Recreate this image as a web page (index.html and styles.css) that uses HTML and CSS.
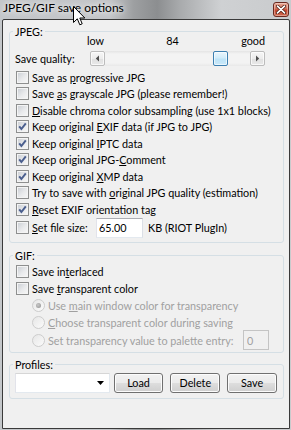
FILE: index.html
```html
<!DOCTYPE html>
<html lang="en">
<head>
<meta charset="utf-8">
<title>JPEG/GIF save options</title>
<link rel="stylesheet" href="styles.css">
</head>
<body>
<div class="window">
  <div class="titlebar">
    <span class="title">JPEG/GIF save options</span>
    <span class="close" role="button" aria-label="Close">
      <svg width="10" height="9" viewBox="0 0 10 9"><path d="M1.5 1.2 L8.5 7.8 M8.5 1.2 L1.5 7.8" stroke="#4a1a10" stroke-width="3.2" stroke-linecap="round"/><path d="M1.5 1.2 L8.5 7.8 M8.5 1.2 L1.5 7.8" stroke="#ffffff" stroke-width="1.7" stroke-linecap="round"/></svg>
    </span>
  </div>
  <div class="client">
    <fieldset class="group group-jpeg">
      <legend>JPEG:</legend>
      <div class="scale"><span>low</span><span>84</span><span>good</span></div>
      <div class="quality">
        <span class="q-label">Save quality:</span>
        <div class="scrollbar">
          <span class="sb-btn"><svg width="5" height="7" viewBox="0 0 5 7"><path d="M4 0.5 L0.8 3.5 L4 6.5 Z" fill="#505050"/></svg></span>
          <span class="sb-track"><span class="sb-thumb"></span></span>
          <span class="sb-btn"><svg width="5" height="7" viewBox="0 0 5 7"><path d="M1 0.5 L4.2 3.5 L1 6.5 Z" fill="#505050"/></svg></span>
        </div>
      </div>
      <div class="rows">
        <label class="row"><span class="cb"></span><span class="txt">Save as <u>p</u>rogressive JPG</span></label>
        <label class="row"><span class="cb"></span><span class="txt">Save <u>a</u>s grayscale JPG (please remember!)</span></label>
        <label class="row"><span class="cb"></span><span class="txt"><u>D</u>isable chroma color subsampling (use 1x1 blocks)</span></label>
        <label class="row"><span class="cb on"><svg width="11" height="11" viewBox="0 0 11 11"><path d="M2.2 5.4 L4.4 8 L8.8 2.4" fill="none" stroke="#4b5f8e" stroke-width="2"/></svg></span><span class="txt">Keep original <u>E</u>XIF data (if JPG to JPG)</span></label>
        <label class="row"><span class="cb on"><svg width="11" height="11" viewBox="0 0 11 11"><path d="M2.2 5.4 L4.4 8 L8.8 2.4" fill="none" stroke="#4b5f8e" stroke-width="2"/></svg></span><span class="txt">Keep original <u>I</u>PTC data</span></label>
        <label class="row"><span class="cb on"><svg width="11" height="11" viewBox="0 0 11 11"><path d="M2.2 5.4 L4.4 8 L8.8 2.4" fill="none" stroke="#4b5f8e" stroke-width="2"/></svg></span><span class="txt">Keep original JPG-<u>C</u>omment</span></label>
        <label class="row"><span class="cb on"><svg width="11" height="11" viewBox="0 0 11 11"><path d="M2.2 5.4 L4.4 8 L8.8 2.4" fill="none" stroke="#4b5f8e" stroke-width="2"/></svg></span><span class="txt">Keep original <u>X</u>MP data</span></label>
        <label class="row"><span class="cb"></span><span class="txt">Try to save with <u>o</u>riginal JPG quality (estimation)</span></label>
        <label class="row"><span class="cb on"><svg width="11" height="11" viewBox="0 0 11 11"><path d="M2.2 5.4 L4.4 8 L8.8 2.4" fill="none" stroke="#4b5f8e" stroke-width="2"/></svg></span><span class="txt"><u>R</u>eset EXIF orientation tag</span></label>
        <div class="row row-size">
          <label class="size-label"><span class="cb"></span><span class="txt"><u>S</u>et file size:</span></label>
          <input class="num" type="text" value="65.00">
          <span class="unit">KB (RIOT PlugIn)</span>
        </div>
      </div>
    </fieldset>

    <fieldset class="group group-gif">
      <legend>GIF:</legend>
      <label class="row row-gif"><span class="cb"></span><span class="txt">Save in<u>t</u>erlaced</span></label>
      <label class="row row-gif"><span class="cb"></span><span class="txt">Save <u>t</u>ransparent color</span></label>
      <label class="row row-gif disabled"><span class="rb on"></span><span class="txt">Use <u>m</u>ain window color for transparency</span></label>
      <label class="row row-gif disabled"><span class="rb"></span><span class="txt"><u>C</u>hoose transparent color during saving</span></label>
      <div class="row row-gif disabled"><span class="rb"></span><span class="txt">Set transparency value to palette entry:</span><input class="pal" type="text" value="0" disabled></div>
    </fieldset>

    <fieldset class="group group-profiles">
      <legend>Profiles:</legend>
      <div class="profiles-row">
        <span class="combo"><svg width="7" height="4" viewBox="0 0 7 4"><path d="M0 0 H7 L3.5 4 Z" fill="#000"/></svg></span>
        <button class="btn">Load</button>
        <button class="btn">Delete</button>
        <button class="btn">Save</button>
      </div>
    </fieldset>
  </div>
</div>
<svg class="cursor" width="13" height="21" viewBox="0 0 13 21"><path d="M0.5 0.5 L0.5 16.5 L4.3 12.8 L6.8 18.8 L9.2 17.8 L6.8 12 L11.8 12 Z" fill="#fff" stroke="#000" stroke-width="1" stroke-linejoin="miter"/></svg>
</body>
</html>
```
FILE: styles.css
```css
* { box-sizing: border-box; }
html, body { margin: 0; padding: 0; }
body {
  width: 291px;
  height: 430px;
  overflow: hidden;
  position: relative;
  font-family: Lato, "Open Sans", sans-serif;
  font-size: 10.8px;
  color: #000;
  background: linear-gradient(90deg, #c4c7ca 0%, #c3c5c8 38%, #9d9fa1 46%, #8c8e90 54%, #a9abad 62%, #cfd1d3 76%, #c9cbcd 100%);
}
.window { display: flex; flex-direction: column; height: 430px; }
.titlebar {
  height: 19px;
  display: flex;
  justify-content: space-between;
  align-items: flex-start;
  padding: 0 2px 0 3px;
}
.title {
  font-size: 12px;
  line-height: 16px;
  text-shadow: 0 0 5px rgba(255,255,255,0.9), 0 0 9px rgba(255,255,255,0.7);
}
.close {
  width: 16px;
  height: 15px;
  margin-top: 2px;
  border: 1px solid #6b2a20;
  border-radius: 3px;
  background: linear-gradient(#e9a894 0%, #d57a62 40%, #c4472f 55%, #d06a50 100%);
  box-shadow: inset 0 0 0 1px rgba(255,255,255,0.35);
  display: flex;
  align-items: center;
  justify-content: center;
}
.client {
  margin: 0 1px 0 2px;
  height: 410px;
  border: 1px solid #3a3a3a;
  border-radius: 2px 2px 0 0;
  background: #f0f0f0;
  padding: 5px 5px 0 6px;
  display: flex;
  flex-direction: column;
}
.group {
  margin: 0;
  min-width: 0;
  border: 1px solid #d5dfe5;
  border-radius: 3px;
  padding: 0 6px 4px 6px;
}
.group legend {
  padding: 0 2px;
  margin-left: -3px;
  line-height: 13px;
}
.scale {
  display: flex;
  justify-content: space-between;
  margin: -2px 0 0 71px;
  width: 178px;
  height: 10px;
  line-height: 10px;
}
.quality {
  display: flex;
  align-items: center;
  height: 15px;
  margin-top: 5px;
}
.q-label { width: 75px; margin-left: -1px; }
.scrollbar { display: flex; width: 175px; height: 15px; }
.sb-btn {
  flex: none;
  width: 15px;
  height: 15px;
  border: 1px solid #bcbcbc;
  border-radius: 2px;
  background: linear-gradient(#f7f7f7 0%, #ececec 50%, #e0e0e0 51%, #e9e9e9 100%);
  box-shadow: inset 0 0 0 1px rgba(255,255,255,0.7);
  display: flex;
  align-items: center;
  justify-content: center;
}
.sb-track {
  flex: 1;
  display: flex;
  background: linear-gradient(#e4e4e4 0%, #f3f3f3 20%, #f3f3f3 80%, #e8e8e8 100%);
}
.sb-thumb {
  width: 15px;
  height: 15px;
  margin-left: 108px;
  border: 1px solid #3c7fb1;
  border-radius: 2px;
  background: linear-gradient(#eaf6fd 0%, #d2ecfa 45%, #bde3f7 55%, #c9e8f9 100%);
  box-shadow: inset 0 0 0 1px rgba(255,255,255,0.6);
}
.rows { padding-top: 3px; }
.row {
  display: flex;
  align-items: center;
  height: 16.5px;
  white-space: nowrap;
}
.txt { white-space: pre; }
.cb {
  flex: none;
  width: 13px;
  height: 13px;
  margin-right: 3px;
  border: 1px solid #8e8f8f;
  background: linear-gradient(135deg, #c8ccd2 0%, #e9eaec 55%, #f8f8f8 100%);
  box-shadow: inset 0 0 0 1px #f4f4f4;
  display: flex;
  align-items: center;
  justify-content: center;
}
u { text-decoration: underline; text-underline-offset: 1px; }
.row-size { height: 20px; }
.size-label { display: flex; align-items: center; width: 80px; }
.num {
  width: 47px;
  height: 20px;
  margin: 0;
  padding: 0 2px;
  font: inherit;
  color: #000;
  background: #fff;
  border: 1px solid;
  border-color: #abadb3 #dbdfe6 #e3e9ef #e2e3ea;
  outline: none;
}
.unit { margin-left: 5px; }
.group-gif { margin-top: 6px; padding-bottom: 3px; }
.group-gif .row-gif:first-of-type { margin-top: 1px; }
.row-gif { height: 17px; }
.disabled { color: #a0a0a0; }
.rb {
  flex: none;
  position: relative;
  width: 13px;
  height: 13px;
  margin-left: 16px;
  margin-right: 3px;
  border-radius: 50%;
  border: 1px solid #cdcdcd;
  background: linear-gradient(135deg, #e6e6e6, #fbfbfb);
}
.rb.on::after {
  content: "";
  position: absolute;
  left: 3px;
  top: 3px;
  width: 5px;
  height: 5px;
  border-radius: 50%;
  background: radial-gradient(circle at 40% 40%, #c8c8c8, #8f8f8f);
}
.pal {
  margin: 0 8px 0 auto;
  width: 26px;
  height: 20px;
  padding: 0 3px;
  font: inherit;
  color: #a0a0a0;
  background: #f0f0f0;
  border: 1px solid #c4c4c4;
}
.group-profiles { margin-top: 5px; padding-bottom: 5px; }
.profiles-row {
  display: flex;
  align-items: center;
  height: 20px;
  margin: 2px 0 0 -1px;
}
.combo {
  width: 95px;
  height: 20px;
  background: #fff;
  border: 1px solid;
  border-color: #d6d6d6 #e3e9ef #e3e9ef #e2e3ea;
  display: flex;
  align-items: center;
  justify-content: flex-end;
  padding-right: 5px;
}
.btn {
  width: 50px;
  height: 20px;
  margin: 0 0 0 7px;
  padding: 0;
  font: inherit;
  color: #000;
  border: 1px solid #707070;
  border-radius: 3px;
  background: linear-gradient(#f2f2f2 0%, #ebebeb 48%, #dddddd 52%, #cfcfcf 100%);
  box-shadow: inset 0 0 0 1px #fcfcfc;
}
.combo + .btn { margin-left: 4px; }
.cursor {
  position: absolute;
  left: 73px;
  top: 6px;
}
```
